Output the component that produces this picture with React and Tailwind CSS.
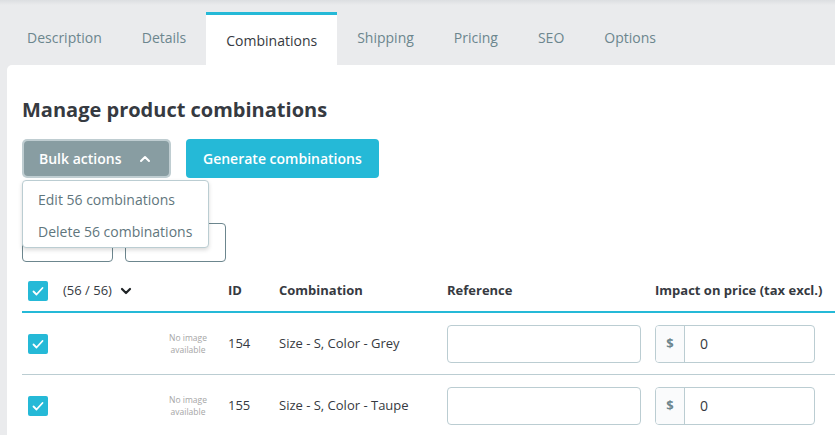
import React from "react";

const font = { fontFamily: '"Open Sans", "Liberation Sans", sans-serif' };

function Check() {
  return (
    <div className="w-[20px] h-[20px] rounded-[2px] bg-[#25b9d7] flex items-center justify-center">
      <svg width="14" height="14" viewBox="0 0 14 14" fill="none">
        <polyline points="2.5,7.5 5.5,10.5 11.5,4" stroke="white" strokeWidth="1.8" strokeLinecap="round" strokeLinejoin="round" />
      </svg>
    </div>
  );
}

function NoImage() {
  return (
    <div className="w-[40px] flex flex-col items-center whitespace-nowrap text-[8.5px] leading-[12px] text-[#a6a6a6]">
      <span>No image</span>
      <span>available</span>
    </div>
  );
}

function Row({ id, name }) {
  return (
    <div className="flex items-center h-[62px] border-b border-[#bbcdd2] text-[13px] text-[#363a41]">
      <div className="w-[140px] pl-[6px]"><Check /></div>
      <div className="w-[66px] pl-[6px]"><NoImage /></div>
      <div className="w-[51px]">{id}</div>
      <div className="w-[168px]">{name}</div>
      <div className="w-[208px]">
        <div className="w-[194px] h-[38px] border border-[#bbcdd2] rounded-[4px] bg-white" />
      </div>
      <div className="flex-1">
        <div className="w-[160px] h-[38px] border border-[#bbcdd2] rounded-[4px] flex overflow-hidden">
          <div className="w-[29px] bg-[#fafbfc] border-r border-[#bbcdd2] flex items-center justify-center text-[13px] font-bold text-[#6c868e]">$</div>
          <div className="flex items-center pl-[15px] text-[14px] text-[#363a41]">0</div>
        </div>
      </div>
    </div>
  );
}

export default function App() {
  const tabs = ["Description", "Details", "Combinations", "Shipping", "Pricing", "SEO", "Options"];
  return (
    <div style={font} className="w-[835px] h-[435px] overflow-hidden bg-[#eaebed] relative">
      <div className="absolute top-0 left-0 right-0 h-[5px] bg-gradient-to-b from-[#dcdee1] to-[#eaebed]" />
      <div className="flex pl-[7px] pt-[12px] h-[65px]">
        {tabs.map((t) =>
          t === "Combinations" ? (
            <div key={t} className="px-5 bg-white border-t-[3px] border-[#25b9d7] flex items-center pt-[1px] text-[14px] text-[#363a41]">
              {t}
            </div>
          ) : (
            <div key={t} className="px-5 flex items-center pb-[2px] text-[14px] text-[#6c868e]">
              {t}
            </div>
          )
        )}
      </div>
      <div className="ml-[7px] bg-white rounded-tl-[5px] h-[370px] pl-[15px] pt-[30px]">
        <h2 className="text-[20px] font-bold text-[#363a41] leading-[30px]">Manage product combinations</h2>
        <div className="relative mt-[14px]">
          <div className="flex gap-[15px]">
            <div className="w-[149px] h-[39px] rounded-[5px] bg-[#bfcdd1] p-[2px]">
              <div className="w-full h-full rounded-[4px] bg-[#889da2] flex items-center pl-[15px] text-[14px] font-semibold text-white">
                <span>Bulk actions</span>
                <svg className="ml-[18px]" width="12" height="12" viewBox="0 0 12 12" fill="none">
                  <polyline points="2,8 6,4 10,8" stroke="white" strokeWidth="2" strokeLinecap="round" strokeLinejoin="round" />
                </svg>
              </div>
            </div>
            <div className="h-[39px] px-[17px] rounded-[4px] bg-[#25b9d7] flex items-center text-[14px] font-semibold text-white">
              Generate combinations
            </div>
          </div>
          <div className="flex gap-[12px] mt-[45px]">
            <div className="w-[91px] h-[39px] border border-[#6c868e] rounded-[4px]" />
            <div className="w-[101px] h-[39px] border border-[#6c868e] rounded-[4px]" />
          </div>
          <div className="absolute left-0 top-[41px] w-[187px] h-[68px] bg-white border border-[#bbcdd2] rounded-[4px] shadow-[0_2px_4px_rgba(0,0,0,0.15)] flex flex-col justify-center pt-[2px] text-[14px] text-[#5f767d]">
            <div className="pl-[15px] h-[33px] flex items-center">Edit 56 combinations</div>
            <div className="pl-[15px] h-[33px] flex items-center">Delete 56 combinations</div>
          </div>
        </div>
        <div className="mt-[9px]">
          <div className="flex items-center h-[42px] border-b-2 border-[#25b9d7] text-[13px] font-bold text-[#363a41]">
            <div className="w-[140px] pl-[6px] flex items-center">
              <Check />
              <span className="ml-[15px] font-normal">(56 / 56)</span>
              <svg className="ml-[8px]" width="12" height="12" viewBox="0 0 12 12" fill="none">
                <polyline points="2,4 6,8 10,4" stroke="#1f2326" strokeWidth="2.2" strokeLinecap="round" strokeLinejoin="round" />
              </svg>
            </div>
            <div className="w-[66px]" />
            <div className="w-[51px]">ID</div>
            <div className="w-[168px]">Combination</div>
            <div className="w-[208px]">Reference</div>
            <div className="flex-1 whitespace-nowrap">Impact on price (tax excl.)</div>
          </div>
          <Row id="154" name="Size - S, Color - Grey" />
          <Row id="155" name="Size - S, Color - Taupe" />
        </div>
      </div>
    </div>
  );
}
